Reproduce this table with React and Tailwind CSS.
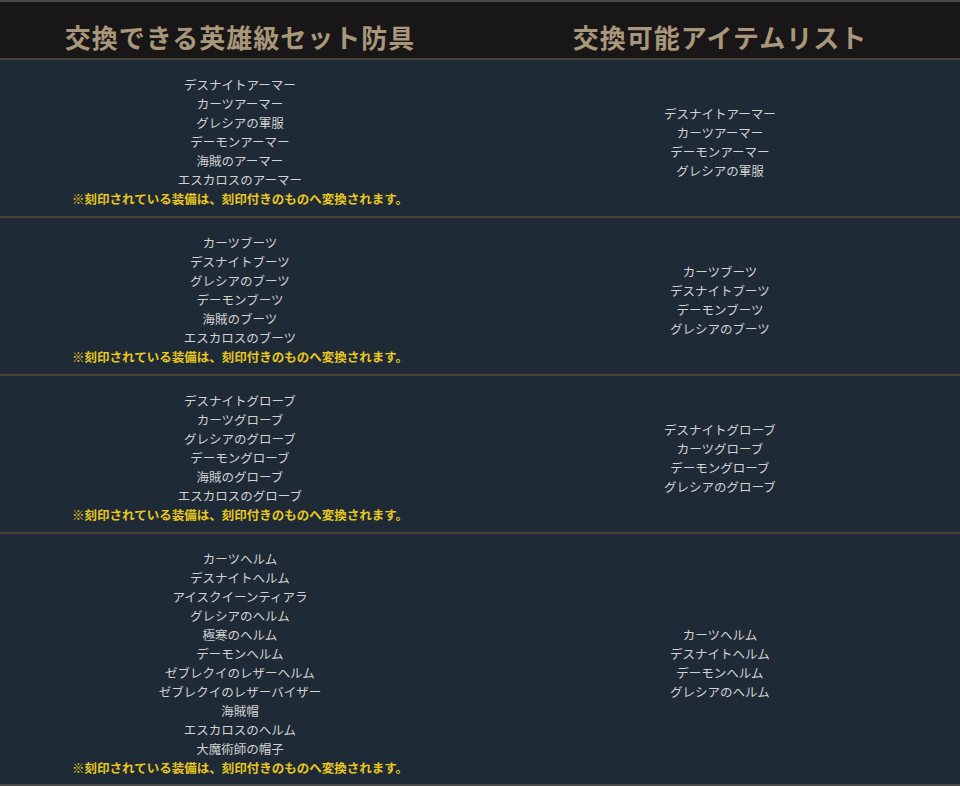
import React from 'react';

const NOTE = '※刻印されている装備は、刻印付きのものへ変換されます。';

const rows = [
  {
    left: ['デスナイトアーマー', 'カーツアーマー', 'グレシアの軍服', 'デーモンアーマー', '海賊のアーマー', 'エスカロスのアーマー'],
    right: ['デスナイトアーマー', 'カーツアーマー', 'デーモンアーマー', 'グレシアの軍服'],
  },
  {
    left: ['カーツブーツ', 'デスナイトブーツ', 'グレシアのブーツ', 'デーモンブーツ', '海賊のブーツ', 'エスカロスのブーツ'],
    right: ['カーツブーツ', 'デスナイトブーツ', 'デーモンブーツ', 'グレシアのブーツ'],
  },
  {
    left: ['デスナイトグローブ', 'カーツグローブ', 'グレシアのグローブ', 'デーモングローブ', '海賊のグローブ', 'エスカロスのグローブ'],
    right: ['デスナイトグローブ', 'カーツグローブ', 'デーモングローブ', 'グレシアのグローブ'],
  },
  {
    left: [
      'カーツヘルム', 'デスナイトヘルム', 'アイスクイーンティアラ', 'グレシアのヘルム', '極寒のヘルム', 'デーモンヘルム',
      'ゼブレクイのレザーヘルム', 'ゼブレクイのレザーバイザー', '海賊帽', 'エスカロスのヘルム', '大魔術師の帽子',
    ],
    right: ['カーツヘルム', 'デスナイトヘルム', 'デーモンヘルム', 'グレシアのヘルム'],
  },
];

const font = { fontFamily: '"Noto Sans CJK JP", "Noto Sans", sans-serif' };

export default function App() {
  return (
    <div className="w-[960px] h-[786px] bg-[#1f2a37] border-t-2 border-b-2 border-[#4a4a4a] flex flex-col" style={font}>
      <div className="flex h-[58px] pt-[12px] bg-[#181616] border-b-2 border-[#4b4236] shrink-0">
        <div className="w-1/2 flex items-center justify-center text-[26px] font-bold tracking-[1px] text-[#a8977a]">
          交換できる英雄級セット防具
        </div>
        <div className="w-1/2 flex items-center justify-center text-[26px] font-bold tracking-[1px] text-[#a8977a]">
          交換可能アイテムリスト
        </div>
      </div>
      {rows.map((row, i) => (
        <div
          key={i}
          className={`flex ${i < rows.length - 1 ? 'border-b-2 border-[#4b4236]' : 'flex-1'}`}
        >
          <div className="w-1/2 flex flex-col items-center justify-center pt-[15px] pb-[8px] text-[12.5px] leading-[19px] text-[#d2d2d2]">
            {row.left.map((t) => (
              <div key={t}>{t}</div>
            ))}
            <div className="font-bold text-[#e8c81e]">{NOTE}</div>
          </div>
          <div className="w-1/2 flex flex-col items-center justify-center pt-[15px] pb-[8px] text-[12.5px] leading-[19px] text-[#d2d2d2]">
            {row.right.map((t) => (
              <div key={t}>{t}</div>
            ))}
          </div>
        </div>
      ))}
    </div>
  );
}
